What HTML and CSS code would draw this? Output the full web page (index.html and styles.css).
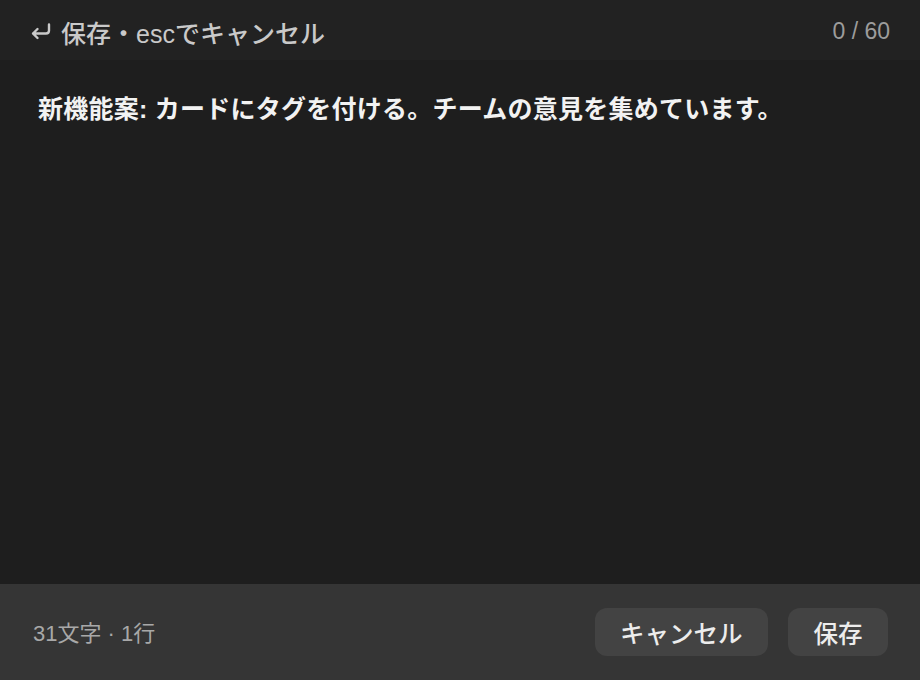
FILE: index.html
```html
<!DOCTYPE html>
<html lang="ja">
<head>
<meta charset="utf-8">
<link rel="stylesheet" href="styles.css">
</head>
<body>
<div class="app">
  <header class="bar">
    <div class="hint">
      <svg class="ret" viewBox="0 0 22 20" width="22" height="20"><path d="M19 2.5 V8.5 Q19 11.5 16 11.5 H3 M7.5 7 L3 11.5 L7.5 16" fill="none" stroke="currentColor" stroke-width="2.4" stroke-linecap="round" stroke-linejoin="round"/></svg>
      <span>保存・escでキャンセル</span>
    </div>
    <div class="count">0 / 60</div>
  </header>
  <main class="content">
    <p class="text">新機能案: カードにタグを付ける。チームの意見を集めています。</p>
  </main>
  <footer class="foot">
    <div class="stats">31文字 · 1行</div>
    <div class="actions">
      <button class="btn">キャンセル</button>
      <button class="btn">保存</button>
    </div>
  </footer>
</div>
</body>
</html>
```
FILE: styles.css
```css
html, body {
  margin: 0;
  padding: 0;
  background: #1e1e1e;
}
body {
  font-family: "Liberation Sans", "Noto Sans CJK JP", sans-serif;
}
.app {
  width: 920px;
  height: 680px;
  display: flex;
  flex-direction: column;
}
.bar {
  height: 60px;
  flex: none;
  box-sizing: border-box;
  background: #222222;
  display: flex;
  align-items: center;
  justify-content: space-between;
  padding: 3px 30px 0 30px;
}
.hint {
  display: flex;
  align-items: center;
  gap: 9px;
  color: #c9c9c9;
  font-size: 25px;
  font-weight: 500;
}
.ret {
  display: block;
  color: #c9c9c9;
}
.count {
  color: #9c9c9c;
  font-size: 23px;
}
.content {
  flex: 1;
  padding: 0 38px;
}
.text {
  margin: 31px 0 0;
  color: #f2f2f2;
  font-size: 25px;
  font-weight: 700;
  line-height: 36px;
  letter-spacing: 0.25px;
}
.foot {
  height: 96px;
  flex: none;
  box-sizing: border-box;
  background: #353535;
  display: flex;
  align-items: center;
  justify-content: space-between;
  padding: 0 32px 2px 33px;
}
.stats {
  color: #a8a8a8;
  font-size: 22px;
}
.actions {
  display: flex;
  gap: 20px;
  padding-top: 2px;
}
.btn {
  height: 48px;
  padding: 0 25.5px;
  border: none;
  border-radius: 12px;
  background: #434343;
  color: #ececec;
  font-family: "Liberation Sans", "Noto Sans CJK JP", sans-serif;
  font-size: 24.5px;
  font-weight: 500;
}
```
